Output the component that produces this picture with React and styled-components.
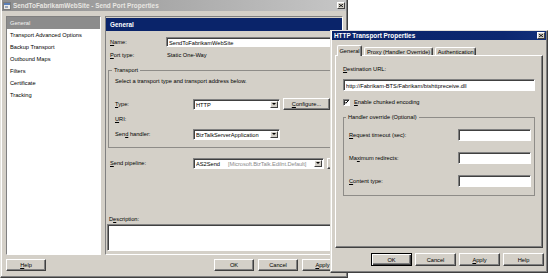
import styled, { createGlobalStyle } from "styled-components";

const GlobalStyle = createGlobalStyle`
  html, body { margin: 0; padding: 0; background: #fff; }
  body { font-family: "Liberation Sans", Arial, sans-serif; }
`;

const Desktop = styled.div`
  position: relative;
  width: 550px;
  height: 278px;
  overflow: hidden;
  background: #fff;
  font-family: "Liberation Sans", Arial, sans-serif;
  font-size: 5.7px;
  line-height: 8px;
  color: #000;
`;

const Window = styled.div`
  position: absolute;
  left: ${p => p.$x}px;
  top: ${p => p.$y}px;
  width: ${p => p.$w}px;
  height: ${p => p.$h}px;
  box-sizing: border-box;
  display: flex;
  flex-direction: column;
  padding: ${p => p.$pad};
  background: #d4d0c8;
  border: 1px solid;
  border-color: #e4e2dc #404040 #404040 #e4e2dc;
  box-shadow: inset -1px -1px 0 #808080, inset 1px 1px 0 #fff;
`;

const TitleBar = styled.div`
  flex: none;
  height: ${p => p.$h}px;
  display: flex;
  align-items: center;
  gap: 2px;
  padding: 0 1px 0 ${p => p.$pl}px;
  background: ${p => p.$active
    ? "linear-gradient(90deg, #0a246a, #0c2870 80%, #12307a)"
    : "linear-gradient(90deg, #8e8e8e, #c6c6c6)"};
  color: ${p => (p.$active ? "#fff" : "#e8e6e2")};
  font-weight: bold;
  font-size: 6.4px;
`;

const TitleText = styled.span`
  flex: 1;
  white-space: nowrap;
  overflow: hidden;
`;

const CloseBox = styled.span`
  flex: none;
  width: 8px;
  height: 7px;
  box-sizing: border-box;
  display: flex;
  align-items: center;
  justify-content: center;
  background: #d4d0c8;
  border: 1px solid;
  border-color: #fff #404040 #404040 #fff;
`;

const Body = styled.div`
  flex: 1;
  display: flex;
  flex-direction: column;
  padding: ${p => p.$pad};
`;

const MainRow = styled.div`
  display: flex;
  gap: 4px;
  height: 239px;
`;

const Sunken = styled.div`
  box-sizing: border-box;
  border: 1px solid;
  border-color: #808080 #fff #fff #808080;
`;

const NavList = styled(Sunken)`
  width: 95px;
  flex: none;
  background: #fff;
`;

const NavItem = styled.div`
  height: 12px;
  display: flex;
  align-items: center;
  padding-left: 3px;
  white-space: nowrap;
  background: ${p => (p.$selected ? "#8c8c8c" : "transparent")};
  color: ${p => (p.$selected ? "#f4f4f4" : "#000")};
`;

const ContentPanel = styled(Sunken)`
  flex: 1;
  min-width: 0;
  display: flex;
  flex-direction: column;
`;

const PanelHeader = styled.div`
  margin-top: 1px;
  height: 13px;
  display: flex;
  align-items: center;
  padding-left: 4px;
  background: #0a246a;
  color: #fff;
  font-weight: bold;
  font-size: 6.4px;
`;

const Form = styled.div`
  display: flex;
  flex-direction: column;
  padding: 0 ${p => p.$px}px;
`;

const Row = styled.div`
  display: flex;
  align-items: center;
  height: ${p => p.$h || 10}px;
  margin-top: ${p => p.$mt || 0}px;
  padding-left: ${p => p.$pl || 0}px;
  white-space: nowrap;
`;

const Label = styled.span`
  flex: ${p => (p.$w ? "none" : 1)};
  width: ${p => (p.$w ? `${p.$w}px` : "auto")};
  white-space: nowrap;
`;

const Field = styled.div`
  box-sizing: border-box;
  height: ${p => p.$h || 10}px;
  width: ${p => (p.$w ? `${p.$w}px` : "auto")};
  flex: ${p => (p.$w ? "none" : 1)};
  margin-left: ${p => p.$ml || 0}px;
  display: flex;
  align-items: center;
  padding: 0 1px 0 2px;
  background: #fff;
  border: 1px solid;
  border-color: #808080 #fff #fff #808080;
  box-shadow: inset 1px 1px 0 #404040;
  white-space: nowrap;
  overflow: hidden;
`;

const Value = styled.span`
  flex: 1;
  min-width: 0;
  overflow: hidden;
  padding-top: 1px;
`;

const Muted = styled.span`
  color: #8a8a8a;
  margin-left: 8px;
  letter-spacing: -0.1px;
`;

const DropButton = styled.span`
  flex: none;
  width: 8px;
  height: 7px;
  box-sizing: border-box;
  display: flex;
  align-items: center;
  justify-content: center;
  background: #d4d0c8;
  border: 1px solid;
  border-color: #fff #404040 #404040 #fff;

  &::after {
    content: "";
    border-left: 2px solid transparent;
    border-right: 2px solid transparent;
    border-top: 2px solid #000;
  }
`;

const Button = styled.div`
  box-sizing: border-box;
  flex: none;
  width: ${p => p.$w}px;
  height: ${p => p.$h || 12}px;
  margin-left: ${p => p.$ml || 0}px;
  display: flex;
  align-items: center;
  justify-content: center;
  background: #d4d0c8;
  border: 1px solid;
  border-color: ${p => (p.$default ? "#000" : "#fff #404040 #404040 #fff")};
  box-shadow: ${p => (p.$default
    ? "inset 1px 1px 0 #fff, inset -1px -1px 0 #404040, inset -2px -2px 0 #808080"
    : "inset -1px -1px 0 #808080")};
  white-space: nowrap;
`;

const ButtonBar = styled.div`
  display: flex;
  justify-content: ${p => p.$justify};
  align-items: center;
  gap: ${p => p.$gap}px;
  margin-top: ${p => p.$mt}px;
  margin-right: ${p => p.$mr || 0}px;
`;

const ButtonGroup = styled.div`
  display: flex;
  gap: 4px;
`;

const Group = styled.fieldset`
  margin: ${p => p.$mt}px 0 0;
  padding: 2px ${p => p.$pr}px ${p => p.$pb}px ${p => p.$pl}px;
  border: 1px solid #8e8c88;
  min-width: 0;
  display: flex;
  flex-direction: column;
`;

const Legend = styled.legend`
  padding: 0 2px;
  margin-left: -3px;
  line-height: 8px;
  height: 8px;
`;

const TextArea = styled(Field)`
  height: 27px;
  flex: none;
  margin-left: -1px;
`;

const Tabs = styled.div`
  display: flex;
  align-items: flex-end;
  gap: 2px;
  height: 10px;
  padding-left: 2px;
  position: relative;
  z-index: 1;
`;

const Tab = styled.div`
  box-sizing: border-box;
  height: ${p => (p.$active ? 11 : 8)}px;
  margin-bottom: ${p => (p.$active ? -1 : 0)}px;
  padding: 0 2px;
  display: flex;
  align-items: center;
  justify-content: center;
  white-space: nowrap;
  background: #d4d0c8;
  border: 1px solid;
  border-bottom: none;
  border-color: #fff #404040 #404040 #fff;
  border-radius: 2px 2px 0 0;
  box-shadow: inset -1px 0 0 #808080;
`;

const TabPanel = styled.div`
  box-sizing: border-box;
  height: 193px;
  display: flex;
  flex-direction: column;
  padding: 0 7px;
  border: 1px solid;
  border-color: #fff #404040 #404040 #fff;
  box-shadow: inset -1px -1px 0 #808080;
`;

const CheckBox = styled.span`
  box-sizing: border-box;
  width: 7px;
  height: 7px;
  margin-right: 4px;
  display: flex;
  align-items: center;
  justify-content: center;
  background: #fff;
  border: 1px solid;
  border-color: #808080 #fff #fff #808080;
  box-shadow: inset 1px 1px 0 #404040;
`;

const AppIcon = () => (
  <svg width="8" height="8" viewBox="0 0 8 8">
    <rect x="0.5" y="0.5" width="7" height="7" fill="#ecebe8" stroke="#7b7b7b" />
    <rect x="1" y="1" width="6" height="2" fill="#5a7fb8" />
    <rect x="2" y="4" width="3" height="2" fill="#9aa9c0" />
  </svg>
);

const CloseGlyph = () => (
  <svg width="4" height="3" viewBox="0 0 4 3">
    <path d="M0 0L4 3M4 0L0 3" stroke="#000" strokeWidth="0.9" />
  </svg>
);

const CheckGlyph = () => (
  <svg width="5" height="4" viewBox="0 0 5 4">
    <path d="M0.4 1.9L1.8 3.3L4.6 0.4" fill="none" stroke="#000" strokeWidth="1" />
  </svg>
);

const navItems = [
  "General",
  "Transport Advanced Options",
  "Backup Transport",
  "Outbound Maps",
  "Filters",
  "Certificate",
  "Tracking",
];

const SendPortWindow = () => (
  <Window $x={0} $y={-2} $w={348} $h={280} $pad="1px">
    <TitleBar $h={11} $pl={1}>
      <AppIcon />
      <TitleText>SendToFabrikamWebSite - Send Port Properties</TitleText>
      <CloseBox><CloseGlyph /></CloseBox>
    </TitleBar>
    <Body $pad="5px 3px 0 4px">
      <MainRow>
        <NavList>
          {navItems.map((item, i) => (
            <NavItem key={item} $selected={i === 0}>{item}</NavItem>
          ))}
        </NavList>
        <ContentPanel>
          <PanelHeader>General</PanelHeader>
          <Form $px={2}>
            <Row $mt={6} $pl={2}>
              <Label $w={56}><u>N</u>ame:</Label>
              <Field><Value>SendToFabrikamWebSite</Value></Field>
            </Row>
            <Row $mt={3} $pl={2}>
              <Label $w={57}><u>P</u>ort type:</Label>
              <span>Static One-Way</span>
            </Row>
            <Group $mt={6} $pl={6} $pr={0} $pb={7}>
              <Legend>Transport</Legend>
              <Row>Select a transport type and transport address below.</Row>
              <Row $mt={12} $h={12}>
                <Label $w={78}><u>T</u>ype:</Label>
                <Field $w={87} $h={11}>
                  <Value>HTTP</Value>
                  <DropButton />
                </Field>
                <Button $w={47} $ml={3}><span><u>C</u>onfigure...</span></Button>
              </Row>
              <Row $mt={4}>
                <Label $w={78}><u>U</u>RI:</Label>
              </Row>
              <Row $mt={4} $h={12}>
                <Label $w={78}>Sen<u>d</u> handler:</Label>
                <Field $w={87} $h={11}>
                  <Value>BizTalkServerApplication</Value>
                  <DropButton />
                </Field>
              </Row>
            </Group>
            <Row $mt={9} $h={12} $pl={2}>
              <Label $w={83}><u>S</u>end pipeline:</Label>
              <Field $w={131} $h={11}>
                <Value>AS2Send<Muted>[Microsoft.BizTalk.EdiInt.Default]</Muted></Value>
                <DropButton />
              </Field>
              <Button $w={10} $h={11} $ml={3}>...</Button>
            </Row>
            <Row $mt={45} $pl={1}>
              <Label>D<u>e</u>scription:</Label>
            </Row>
            <TextArea />
          </Form>
        </ContentPanel>
      </MainRow>
      <ButtonBar $justify="space-between" $gap={0} $mt={4}>
        <Button $w={40}><span><u>H</u>elp</span></Button>
        <ButtonGroup>
          <Button $w={40}>OK</Button>
          <Button $w={40}>Cancel</Button>
          <Button $w={41}><span><u>A</u>pply</span></Button>
        </ButtonGroup>
      </ButtonBar>
    </Body>
  </Window>
);

const HttpDialog = () => (
  <Window $x={330} $y={30} $w={218} $h={243} $pad="0 1px 1px">
    <TitleBar $h={9} $pl={2} $active>
      <TitleText>HTTP Transport Properties</TitleText>
      <CloseBox><CloseGlyph /></CloseBox>
    </TitleBar>
    <Body $pad="5px 3px 0 3px">
      <Tabs>
        <Tab $active style={{ width: 25 }}>General</Tab>
        <Tab>Proxy (Handler Override)</Tab>
        <Tab style={{ width: 41 }}>Authentication</Tab>
      </Tabs>
      <TabPanel>
        <Row $mt={8}>
          <Label><u>D</u>estination URL:</Label>
        </Row>
        <Field $h={12} style={{ flex: "none", marginTop: 5 }}>
          <Value>http://Fabrikam-BTS/Fabrikam/btshttpreceive.dll</Value>
        </Field>
        <Row $mt={6}>
          <CheckBox><CheckGlyph /></CheckBox>
          <span><u>E</u>nable chunked encoding</span>
        </Row>
        <Group $mt={6} $pl={5} $pr={3} $pb={8}>
          <Legend>Handler override (Optional)</Legend>
          <Row $mt={6} $h={12}>
            <Label><u>R</u>equest timeout (sec):</Label>
            <Field $w={73} $h={12} />
          </Row>
          <Row $mt={11} $h={12}>
            <Label>Ma<u>x</u>imum redirects:</Label>
            <Field $w={73} $h={12} />
          </Row>
          <Row $mt={11} $h={12}>
            <Label><u>C</u>ontent type:</Label>
            <Field $w={73} $h={12} />
          </Row>
        </Group>
      </TabPanel>
      <ButtonBar $justify="flex-end" $gap={3} $mt={5} $mr={-1}>
        <Button $w={41} $h={13} $default>OK</Button>
        <Button $w={41} $h={13}>Cancel</Button>
        <Button $w={41} $h={13}><span><u>A</u>pply</span></Button>
        <Button $w={41} $h={13}>Help</Button>
      </ButtonBar>
    </Body>
  </Window>
);

export default function App() {
  return (
    <>
      <GlobalStyle />
      <Desktop>
        <SendPortWindow />
        <HttpDialog />
      </Desktop>
    </>
  );
}
